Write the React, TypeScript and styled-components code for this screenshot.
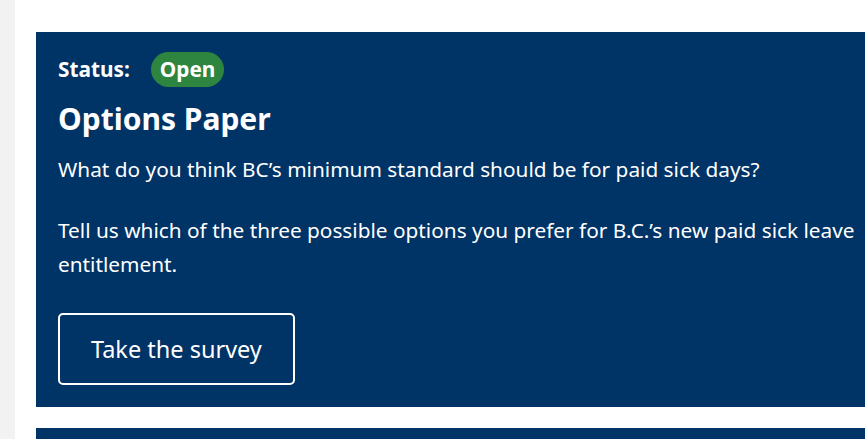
import React from "react";
import styled, { createGlobalStyle } from "styled-components";

const Global = createGlobalStyle`
  html, body { margin: 0; padding: 0; background: #ffffff; }
  body { font-family: "Noto Sans", "Open Sans", sans-serif; overflow: hidden; }
`;

const Page = styled.div`
  display: flex;
  min-height: 439px;
  height: 439px;
  overflow: hidden;
`;

const SideStrip = styled.div`
  width: 15px;
  flex: 0 0 15px;
  background: #f2f2f2;
`;

const Main = styled.main`
  flex: 1;
  padding: 32px 0 0 21px;
  display: flex;
  flex-direction: column;
  gap: 21px;
  min-width: 0;
`;

const Panel = styled.section`
  background: #003366;
  color: #ffffff;
  padding: 19px 0 22px 22px;
  box-sizing: border-box;
  flex: 0 0 auto;
`;

const StatusRow = styled.div`
  display: flex;
  align-items: center;
  gap: 21px;
  height: 36px;
`;

const StatusLabel = styled.span`
  font-size: 20.8px;
  font-weight: 700;
`;

const Badge = styled.span<{ $tone: string }>`
  display: inline-flex;
  align-items: center;
  justify-content: center;
  height: 35px;
  padding: 0 9px;
  border-radius: 18px;
  background: ${(p) => p.$tone};
  font-size: 20.8px;
  font-weight: 700;
`;

const Title = styled.h2`
  margin: 14px 0 0;
  font-size: 30px;
  line-height: 36px;
  font-weight: 700;
`;

const Text = styled.p<{ $gap: number }>`
  margin: ${(p) => p.$gap}px 0 0;
  font-size: 20.8px;
  line-height: 34px;
  white-space: nowrap;
`;

const SurveyButton = styled.a`
  display: inline-flex;
  align-items: center;
  align-self: flex-start;
  box-sizing: border-box;
  height: 72px;
  margin-top: 32px;
  padding: 0 31px;
  border: 2px solid #ffffff;
  border-radius: 5px;
  color: #ffffff;
  font-size: 23.5px;
  text-decoration: none;
`;

const Column = styled.div`
  display: flex;
  flex-direction: column;
  align-items: flex-start;
`;

const NextPanel = styled.section`
  background: #003366;
  height: 60px;
  flex: 0 0 auto;
`;

export default function App() {
  return (
    <>
      <Global />
      <Page>
        <SideStrip />
        <Main>
          <Panel>
            <Column>
              <StatusRow>
                <StatusLabel>Status:</StatusLabel>
                <Badge $tone="#2e8540">Open</Badge>
              </StatusRow>
              <Title>Options Paper</Title>
              <Text $gap={15}>What do you think BC’s minimum standard should be for paid sick days?</Text>
              <Text $gap={27}>
                Tell us which of the three possible options you prefer for B.C.’s new paid sick leave
                <br />
                entitlement.
              </Text>
              <SurveyButton href="#">Take the survey</SurveyButton>
            </Column>
          </Panel>
          <NextPanel />
        </Main>
      </Page>
    </>
  );
}
